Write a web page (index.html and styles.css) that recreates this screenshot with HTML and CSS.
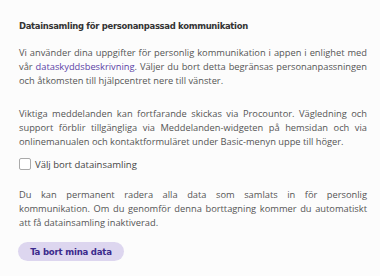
FILE: index.html
```html
<!DOCTYPE html>
<html lang="sv">
<head>
<meta charset="utf-8">
<link rel="stylesheet" href="styles.css">
</head>
<body>
<section class="panel">
  <h2 class="title">Datainsamling för personanpassad kommunikation</h2>
  <p class="text">Vi använder dina uppgifter för personlig kommunikation i appen i enlighet med vår <a class="link" href="#">dataskyddsbeskrivning</a>. Väljer du bort detta begränsas personanpassningen och åtkomsten till hjälpcentret nere till vänster.</p>
  <p class="text">Viktiga meddelanden kan fortfarande skickas via Procountor. Vägledning och support förblir tillgängliga via Meddelanden-widgeten på hemsidan och via onlinemanualen och kontaktformuläret under Basic-menyn uppe till höger.</p>
  <label class="check"><span class="box"></span>Välj bort datainsamling</label>
  <p class="text">Du kan permanent radera alla data som samlats in för personlig kommunikation. Om du genomför denna borttagning kommer du automatiskt att få datainsamling inaktiverad.</p>
  <button class="btn" type="button">Ta bort mina data</button>
</section>
</body>
</html>
```
FILE: styles.css
```css
html, body {
  margin: 0;
  padding: 0;
  background: #fcfcfc;
}
.panel {
  width: 380px;
  height: 276px;
  box-sizing: border-box;
  padding: 19px 13px 0 19px;
  font-family: "Open Sans", "Noto Sans", sans-serif;
  color: #555;
}
.title {
  margin: 0 0 13px;
  font-family: "DejaVu Sans Condensed", sans-serif;
  font-size: 9.4px;
  font-weight: 700;
  letter-spacing: -0.3px;
  line-height: 14px;
  color: #333;
}
.text {
  margin: 0 0 19px;
  font-size: 9.3px;
  line-height: 14px;
  text-align: justify;
}
.link {
  color: #5b3fa6;
  text-decoration: none;
}
.check {
  display: flex;
  align-items: center;
  gap: 4px;
  height: 14px;
  margin: -11px 0 17px;
  font-size: 9.5px;
  color: #444;
}
.box {
  width: 10px;
  height: 10px;
  border: 1px solid #aaa;
  border-radius: 2px;
  background: #fff;
}
.btn {
  display: block;
  margin: -7px 0 0 -1px;
  width: 106px;
  height: 19px;
  padding: 0;
  border: none;
  border-radius: 10px;
  background: #ddd6ef;
  color: #3b2a8c;
  font-family: "DejaVu Sans Condensed", sans-serif;
  font-size: 9.5px;
  font-weight: 700;
  letter-spacing: -0.2px;
}
```
